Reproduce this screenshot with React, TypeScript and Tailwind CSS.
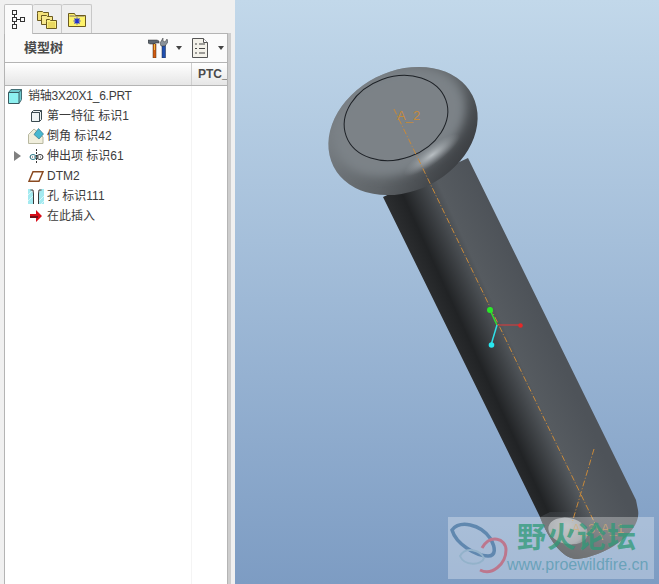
import React from 'react';

const cjk = { fontFamily: '"Liberation Sans","Noto Sans CJK SC",sans-serif' };

function TreeGlyph() {
    return (
        <svg width="14" height="19" viewBox="0 0 14 19" fill="none" stroke="#333" strokeWidth="1">
            <rect x="0.500" y="0.500" width="4" height="4" />
            <rect x="0.500" y="7.500" width="4" height="4" />
            <rect x="0.500" y="14.500" width="4" height="4" />
            <rect x="8.500" y="7.500" width="4" height="4" />
            <path d="M2.500 4.500v3M2.500 11.500v3M4.500 9.500h4" />
        </svg>
    );
}

function FoldersGlyph() {
    return (
        <svg width="20" height="20" viewBox="0 0 20 20">
            <path d="M0.500 4.500V2.500h5l1 1h5v8h-11z" fill="#f5e27a" stroke="#6b5a20" />
            <path d="M4.500 8.500V6.500h5l1 1h5v8h-11z" fill="#f7e88e" stroke="#6b5a20" />
            <path d="M9.500 12.500V10.500h3l1 1h6v8h-10z" fill="#fbef80" stroke="#6b5a20" />
            <path d="M11 14h7M11 16h7M11 18h7" stroke="#d8c040" />
        </svg>
    );
}

function StarFolderGlyph() {
    return (
        <svg width="18" height="15" viewBox="0 0 18 15">
            <path d="M0.500 14.500V1.500h6l1 2h10v11z" fill="#fdf26a" stroke="#6b5a20" />
            <path d="M1.500 3.500h5M1.500 4.500h15" stroke="#b8ad70" />
            <path d="M9 5.500v7M5.500 9h7M6.500 6.500l5 5M11.500 6.500l-5 5" stroke="#2030d0" strokeWidth="1.100" />
        </svg>
    );
}

function ToolsGlyph() {
    return (
        <svg width="20" height="20" viewBox="0 0 20 20">
            <path d="M0 2h9l2 1v2H7v1H2L0 5z" fill="#5c6670" stroke="#333" strokeWidth="0.500" />
            <rect x="5" y="6" width="3" height="14" fill="#d25a10" stroke="#40301c" strokeWidth="0.500" />
            <path d="M6 6h1v6H6z" fill="#f0c040" />
            <rect x="14" y="7" width="3.500" height="13" fill="#2050b0" stroke="#1c2840" strokeWidth="0.500" />
            <path d="M12 5l3-5v3l2 1 2-3 1 3-3 4h-4z" fill="#8a929a" stroke="#333" strokeWidth="0.500" />
        </svg>
    );
}

function ListGlyph() {
    return (
        <svg width="16" height="20" viewBox="0 0 16 20" fill="#fff" stroke="#555">
            <path d="M0.500 0.500h11l4 4v15h-15z" fill="#f4f2ea" />
            <path d="M11.500 0.500v4h4" />
            <path d="M3 6h2M7 6h6M3 10.500h2M7 10.500h6M3 15h2M7 15h6" stroke="#444" />
        </svg>
    );
}

function Caret() {
    return <span className="block w-0 h-0 border-x-[3.500px] border-x-transparent border-t-[4px] border-t-[#444]" />;
}

const icons: Record<string, React.ReactNode> = {
    part: (
        <svg width="14" height="15" viewBox="0 0 14 15">
            <path d="M0.500 3.500L3 0.500h10.500v10L11 14.500H0.500z" fill="#8ef0f0" stroke="#3a5a60" />
            <path d="M3 0.500h10.500v10L11 14.500V3.500H0.500z" fill="#5aa8b0" opacity=".55" />
            <path d="M0.500 3.500H11v11M11 3.500l2.500-3" fill="none" stroke="#3a5a60" />
        </svg>
    ),
    first: (
        <svg width="11" height="12" viewBox="0 0 11 12">
            <path d="M0.500 2.500L2.500 0.500h8v9l-2 2h-8z" fill="#eef4f4" stroke="#3a4a50" />
            <path d="M0.500 2.500h8v9M8.500 2.500l2-2" fill="none" stroke="#3a4a50" />
        </svg>
    ),
    chamfer: (
        <svg width="16" height="16" viewBox="0 0 16 16">
            <path d="M0.500 6.500L6 1l9 8v6.500H0.500z" fill="#f0eedc" stroke="#b8b8a0" />
            <path d="M6 6.500L10.500 0.500 15.500 6 11 11z" fill="#48b8d0" stroke="#2a6a80" strokeWidth=".6" />
        </svg>
    ),
    protrusion: (
        <svg width="15" height="14" viewBox="0 0 15 14" fill="none" stroke="#333">
            <ellipse cx="4" cy="8" rx="3" ry="2.500" stroke="#2a7a8a" />
            <ellipse cx="11" cy="8" rx="3" ry="2.500" />
            <path d="M7.500 0v14" strokeDasharray="2 1" />
            <path d="M1 8h13" strokeDasharray="1 1" stroke="#555" />
        </svg>
    ),
    datum: (
        <svg width="16" height="11" viewBox="0 0 16 11">
            <path d="M1 10.250L5 0.750h10L11 10.250z" fill="none" stroke="#8a4a20" strokeWidth="1.500" />
        </svg>
    ),
    hole: (
        <svg width="16" height="15" viewBox="0 0 16 15" className="shrink-0">
            <rect x="0" y="0" width="16" height="15" fill="#a4eaf0" />
            <path d="M0 6L6 0M0 12L12 0M8 15L16 7M13 15l3-3" stroke="#d6f7fa" />
            <path d="M3 0h10L10.500 5v10h-5V5z" fill="#fff" />
            <path d="M2.500 1h2.500L5.500 5v10M13.500 1H11L10.500 5v10" fill="none" stroke="#3a3a3a" />
        </svg>
    ),
    insert: (
        <svg width="12" height="12" viewBox="0 0 12 12">
            <path d="M0 4h6V0l6 6-6 6V8H0z" fill="#d80c18" />
            <path d="M0 6h8v2H0z" fill="#701018" />
        </svg>
    ),
};

const rows = [
    { key: 'first', label: '第一特征 标识1' },
    { key: 'chamfer', label: '倒角 标识42' },
    { key: 'protrusion', label: '伸出项 标识61', arrow: true },
    { key: 'datum', label: 'DTM2' },
    { key: 'hole', label: '孔 标识111' },
    { key: 'insert', label: '在此插入' },
];

function TreeRow({ icon, label, arrow }: { icon: string; label: string; arrow?: boolean }) {
    return (
        <div className="h-5 flex items-center relative">
            {arrow && (
                <span className="absolute left-[9px] top-[5px] w-0 h-0 border-y-[5px] border-y-transparent border-l-[7px] border-l-[#808080]" />
            )}
            <div className="ml-[23px] w-4 flex justify-center">{icons[icon]}</div>
            <span className="ml-[3px] whitespace-nowrap text-xs text-[#3c3c3c]">{label}</span>
        </div>
    );
}

function Tabs() {
    return (
        <div className="h-[33px] pl-[4px] pt-[4px] flex items-end">
            <div className="w-[29px] h-[30px] bg-[#fbfbfb] border border-b-0 border-[#c2c2c2] rounded-t-[2px] flex items-center justify-center z-10 -mb-px">
                <TreeGlyph />
            </div>
            <div className="w-[29px] h-[29px] bg-[#efefef] border border-l-0 border-b-0 border-[#c8c8c8] rounded-t-[2px] flex items-center justify-center">
                <FoldersGlyph />
            </div>
            <div className="w-[30px] h-[29px] bg-[#efefef] border border-l-0 border-b-0 border-[#c8c8c8] rounded-t-[2px] flex items-center justify-center">
                <StarFolderGlyph />
            </div>
        </div>
    );
}

function ModelTree() {
    return (
        <aside className="w-[235px] shrink-0 h-full bg-[#f0f0f0] flex flex-col" style={cjk}>
            <Tabs />
            <div className="flex-1 flex min-h-0">
                <div className="ml-[4px] w-[224px] border border-b-0 border-[#b4b4b4] bg-[#fbfbfb] flex flex-col">
                    <div className="h-[28px] flex items-center shrink-0">
                        <span className="ml-[19px] text-[13px] font-bold text-[#4a4a4a]">模型树</span>
                        <div className="ml-auto flex items-center">
                            <ToolsGlyph />
                            <span className="ml-[8px]"><Caret /></span>
                            <span className="ml-[10px]"><ListGlyph /></span>
                            <span className="ml-[10px] mr-[3px]"><Caret /></span>
                        </div>
                    </div>
                    <div className="h-[24px] shrink-0 flex border-y border-[#b4b4b4] bg-gradient-to-b from-white to-[#e6e6e6]">
                        <div className="w-[187px] border-r border-[#cfcfcf]" />
                        <div className="flex-1 overflow-hidden pl-[6px] text-xs font-bold text-[#4a4a4a] leading-[23px]">PTC_</div>
                    </div>
                    <div className="flex-1 flex bg-white">
                        <div className="w-[187px] border-r border-[#f4f4f4]">
                            <div className="h-5 flex items-center">
                                <div className="ml-[3px] w-[14px]">{icons.part}</div>
                                <span className="ml-[6px] whitespace-nowrap text-xs tracking-[-0.25px] text-[#3c3c3c]">销轴3X20X1_6.PRT</span>
                            </div>
                            {rows.map((r) => (
                                <TreeRow key={r.key} icon={r.key} label={r.label} arrow={r.arrow} />
                            ))}
                        </div>
                    </div>
                </div>
                <div className="w-[3px] bg-[#cdcdcd]" />
            </div>
        </aside>
    );
}

function PinModel() {
    return (
        <svg className="absolute inset-0 w-full h-full" viewBox="235 0 424 584">
            <defs>
                <linearGradient id="shaft" gradientUnits="userSpaceOnUse" x1="383" y1="197" x2="468" y2="158">
                    <stop offset="0" stopColor="#2c2e30" />
                    <stop offset="0.2" stopColor="#212325" />
                    <stop offset="0.6" stopColor="#565b60" />
                    <stop offset="1" stopColor="#4e5359" />
                </linearGradient>
                <linearGradient id="cap" gradientUnits="userSpaceOnUse" x1="590" y1="512" x2="575" y2="560">
                    <stop offset="0" stopColor="#4e5359" stopOpacity="0" />
                    <stop offset="0.55" stopColor="#3e4246" />
                    <stop offset="1" stopColor="#303336" />
                </linearGradient>
                <radialGradient id="endGlow" gradientUnits="userSpaceOnUse" cx="566" cy="526" r="26">
                    <stop offset="0" stopColor="#a8acb0" />
                    <stop offset="0.7" stopColor="#8e9397" />
                    <stop offset="1" stopColor="#4a4e52" />
                </radialGradient>
                <linearGradient id="rim" gradientUnits="userSpaceOnUse" x1="360" y1="90" x2="420" y2="200">
                    <stop offset="0" stopColor="#767c81" />
                    <stop offset="0.55" stopColor="#5f6468" />
                    <stop offset="1" stopColor="#3a3d41" />
                </linearGradient>
                <radialGradient id="glow" cx="0.5" cy="0.5" r="0.5">
                    <stop offset="0" stopColor="#bcc2c6" stopOpacity="0.95" />
                    <stop offset="1" stopColor="#9aa0a5" stopOpacity="0" />
                </radialGradient>
                <filter id="soft" x="-20%" y="-20%" width="140%" height="140%"><feGaussianBlur stdDeviation="5" /></filter>
                <clipPath id="headClip">
                    <ellipse cx="403" cy="131" rx="78" ry="60" transform="rotate(-27 403 131)" />
                </clipPath>
            </defs>

            {/* shaft */}
            <path d="M383 197L540 517C548 538 562 559 577 559C606 556 642 532 638 510L636 500L468 158Z" fill="url(#shaft)" />
            <path d="M540 517C548 538 562 559 577 559C606 556 642 532 638 510L636 505L590 512L550 512Z" fill="url(#cap)" />
            <ellipse cx="568" cy="531" rx="20" ry="13" transform="rotate(12 568 531)" fill="url(#endGlow)" />

            {/* head */}
            <ellipse cx="403" cy="131" rx="78" ry="60" transform="rotate(-27 403 131)" fill="url(#rim)" />
            <g clipPath="url(#headClip)">
                <ellipse cx="399" cy="122" rx="70" ry="50" transform="rotate(-27 399 122)" fill="#7b8287" filter="url(#soft)" />
                <ellipse cx="432" cy="155" rx="34" ry="9" transform="rotate(-36 432 155)" fill="url(#glow)" />
            </g>
            <ellipse cx="396" cy="118" rx="53" ry="41" transform="rotate(-20 396 118)" fill="none" stroke="#1d2126" strokeWidth="1" />

            {/* datum axes */}
            <g fill="none" stroke="#c98a3a" strokeWidth="1" strokeDasharray="6 2 1 2">
                <path d="M394 109L603 540" />
                <path d="M594 449L572 523" />
            </g>
            <g fontSize="13" fill="#c58a3a" fontFamily="Liberation Sans, sans-serif">
                <text x="397" y="120">A_2</text>
                <text x="572" y="533" fillOpacity="0.7">A_3</text>
                <text x="601" y="533" fillOpacity="0.7">A_1</text>
            </g>

            {/* csys triad */}
            <path d="M497 325L490 310" stroke="#30e030" strokeWidth="1.500" />
            <path d="M497 325L520 325" stroke="#e03838" strokeWidth="1" />
            <path d="M497 325L491 345" stroke="#30e0e8" strokeWidth="1.500" />
            <circle cx="490" cy="310" r="3" fill="#28e828" />
            <circle cx="520.500" cy="325.500" r="2.300" fill="#e82828" />
            <circle cx="491.500" cy="345" r="2.800" fill="#28e8f0" />
        </svg>
    );
}

function Watermark() {
    return (
        <div className="absolute left-[213px] top-[517px] w-[206px] h-[62px] bg-white/30 overflow-hidden" style={cjk}>
            <svg className="absolute left-[2px] top-[3px] opacity-80" width="60" height="56" viewBox="0 0 60 56" fill="none">
                <path d="M2 10C10 0 30 4 40 18C46 28 46 36 38 36C26 36 6 24 2 10Z" stroke="#4f7ba6" strokeWidth="3.500" />
                <path d="M32 28C40 14 56 18 56 30C56 44 42 56 30 50" stroke="#c2677c" strokeWidth="3" />
                <path d="M10 36C16 26 30 30 34 38C32 46 14 46 10 36Z" stroke="#8fb0c8" strokeWidth="2" />
            </svg>
            <div className="absolute left-[69px] top-[4px] whitespace-nowrap text-[29px] leading-[34px] font-bold tracking-[1px] text-[#2f9a78]/75">野火论坛</div>
            <div className="absolute left-[59px] top-[39px] whitespace-nowrap text-[16px] leading-[18px] text-[#4f97ad]/70">www.proewildfire.cn</div>
        </div>
    );
}

export default function App() {
    return (
        <div className="w-[659px] h-[584px] flex overflow-hidden">
            <ModelTree />
            <main className="flex-1 relative bg-gradient-to-b from-[#c2d8ea] to-[#7d9cc3]">
                <PinModel />
                <Watermark />
            </main>
        </div>
    );
}
